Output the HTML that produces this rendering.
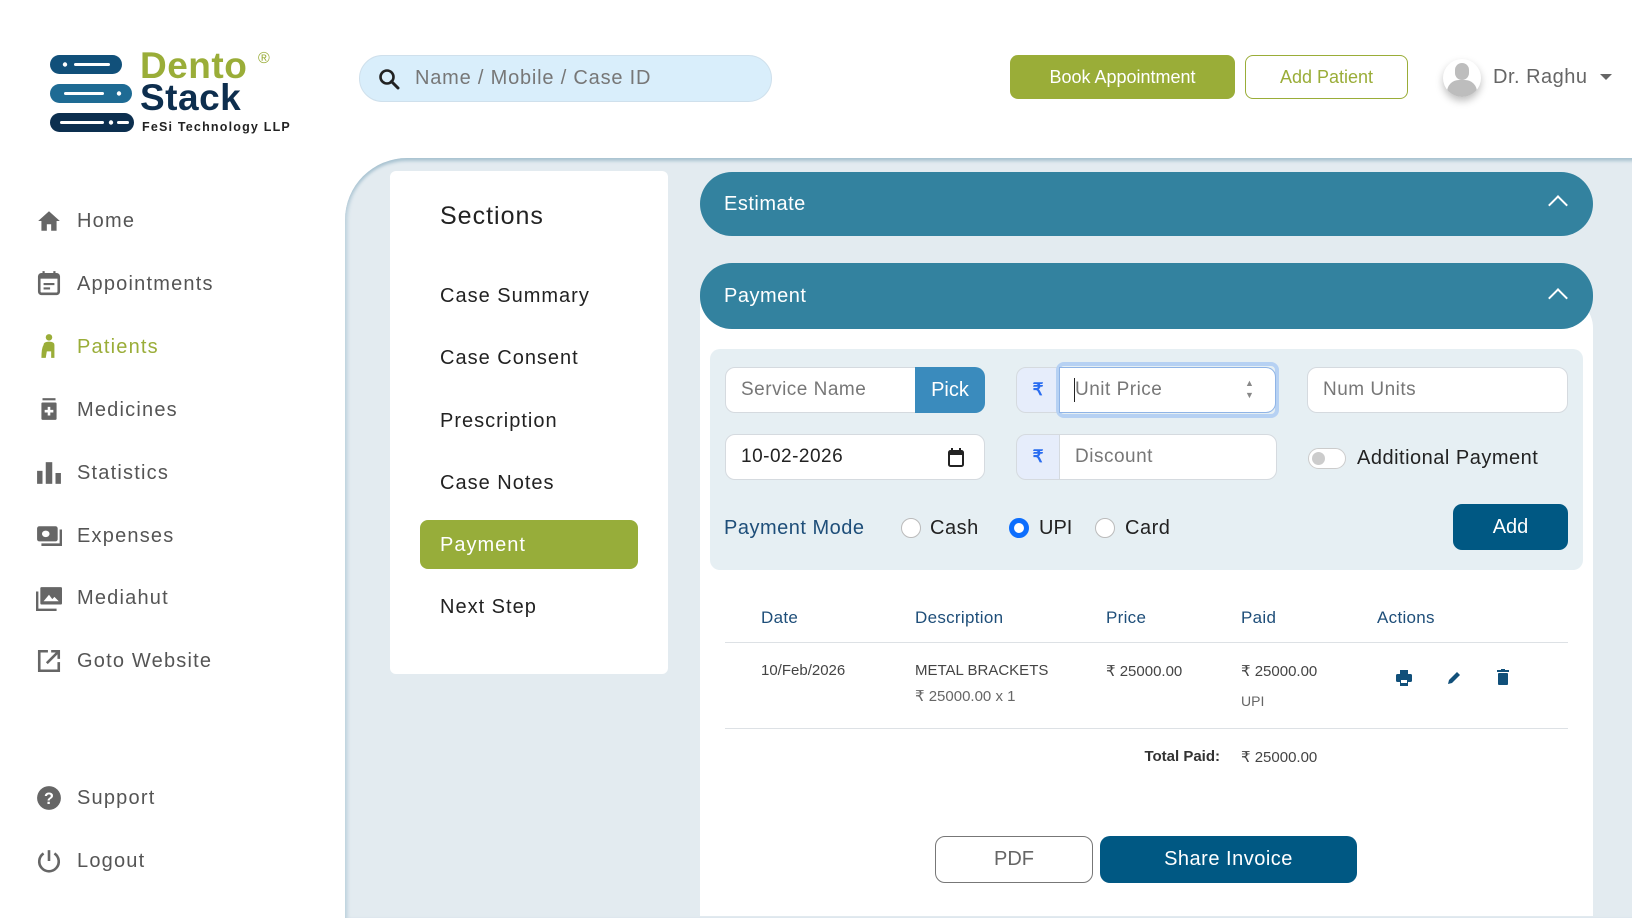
<!DOCTYPE html>
<html><head><meta charset="utf-8">
<style>
*{box-sizing:border-box;margin:0;padding:0}
body{width:1632px;height:897px;overflow:hidden;background:#fff;font-family:"Liberation Sans",sans-serif;position:relative;color:#222}
.abs{position:absolute}
.nav{position:absolute;left:77px;font-size:20px;color:#555;letter-spacing:1.2px}
.navi{position:absolute;left:36px;width:26px;height:26px}
.main{position:absolute;left:345px;top:158px;width:1320px;height:760px;background:#e3ebf0;border-top-left-radius:62px;box-shadow:inset 0 4px 3px -1px #a9c3d1, inset 4px 0 3px -1px #c7d8e2}
.sec{position:absolute;left:390px;top:171px;width:278px;height:503px;background:#fff;border-radius:6px}
.si{position:absolute;left:440px;font-size:20px;color:#222;letter-spacing:1px}
.hdr{position:absolute;left:700px;width:893px;height:64px;background:#33829f;border-radius:32px;color:#fff;font-size:20px;padding:0 0 0 24px;line-height:64px;letter-spacing:0.5px}
.chev{position:absolute;right:28px;top:26px;width:14px;height:14px;border-left:2px solid #fff;border-top:2px solid #fff;transform:rotate(45deg)}
.inp{position:absolute;background:#fff;border:1px solid #d5dadf;border-radius:10px;height:46px;font-size:19px;color:#777;line-height:44px;padding-left:15px;letter-spacing:0.5px}
.rup{position:absolute;background:#e6edfb;border:1px solid #d5dadf;border-radius:10px 0 0 10px;width:44px;height:46px;color:#2a6df0;font-size:17px;text-align:center;line-height:44px;font-weight:bold}
.radio{position:absolute;width:20px;height:20px;border-radius:50%;border:1px solid #bbb;background:#fff}
.th{position:absolute;top:608px;font-size:17px;color:#1e4e79;letter-spacing:0.3px}
.td{position:absolute;font-size:15px;color:#444}
</style></head><body>

<svg class="abs" style="left:50px;top:55px" width="90" height="80" viewBox="0 0 90 80">
<rect x="0" y="0" width="72" height="19" rx="9.5" fill="#11507a"/>
<circle cx="15" cy="9.5" r="2.2" fill="#fff"/><rect x="24" y="8" width="36" height="3" rx="1.5" fill="#fff"/>
<rect x="0" y="29" width="82" height="19" rx="9.5" fill="#1e6b94"/>
<rect x="14" y="37" width="40" height="3" rx="1.5" fill="#fff"/><circle cx="69" cy="38.5" r="2.2" fill="#fff"/>
<rect x="0" y="58" width="84" height="19" rx="9.5" fill="#0c2f4f"/>
<rect x="10" y="66" width="44" height="3" rx="1.5" fill="#fff"/><circle cx="61" cy="67.5" r="2.2" fill="#fff"/><rect x="67" y="66" width="12" height="3" rx="1.5" fill="#fff"/>
</svg>
<div class="abs" style="left:140px;top:45px;font-size:37px;font-weight:bold;color:#9aad38;letter-spacing:0.5px">Dento</div>
<div class="abs" style="left:258px;top:50px;font-size:16px;color:#9aad38">®</div>
<div class="abs" style="left:140px;top:77px;font-size:37px;font-weight:bold;color:#0d2e4e;letter-spacing:0.5px">Stack</div>
<div class="abs" style="left:142px;top:120px;font-size:12.5px;font-weight:bold;color:#222;letter-spacing:1.2px">FeSi Technology LLP</div>

<div class="abs" style="left:359px;top:55px;width:413px;height:47px;background:#d9eefb;border:1px solid #cfe0ec;border-radius:24px"></div>
<svg class="abs" style="left:378px;top:68px" width="22" height="22" viewBox="0 0 22 22"><circle cx="9" cy="9" r="6.5" fill="none" stroke="#222" stroke-width="2.6"/><path d="M13.5 13.5L20 20" stroke="#222" stroke-width="3" stroke-linecap="round"/></svg>
<div class="abs" style="left:415px;top:67px;font-size:20px;color:#777;letter-spacing:0.8px">Name / Mobile / Case ID</div>

<div class="abs" style="left:1010px;top:55px;width:225px;height:44px;background:#9aad38;border-radius:8px;color:#fff;font-size:18px;text-align:center;line-height:44px">Book Appointment</div>
<div class="abs" style="left:1245px;top:55px;width:163px;height:44px;border:1px solid #9aad38;border-radius:8px;color:#9aad38;font-size:18px;text-align:center;line-height:42px">Add Patient</div>
<div class="abs" style="left:1443px;top:59px;width:38px;height:38px;border-radius:50%;background:#fff;box-shadow:0 4px 8px rgba(0,0,0,.25);overflow:hidden">
<div class="abs" style="left:12px;top:4px;width:14px;height:17px;border-radius:7px;background:#bdbdbd"></div>
<div class="abs" style="left:4px;top:21px;width:30px;height:24px;border-radius:12px 12px 0 0;background:#bdbdbd"></div></div>
<div class="abs" style="left:1493px;top:66px;font-size:20px;color:#666;letter-spacing:0.5px">Dr. Raghu</div>
<div class="abs" style="left:1600px;top:74px;width:0;height:0;border-left:6px solid transparent;border-right:6px solid transparent;border-top:6px solid #666"></div>

<svg class="navi" style="top:208px" viewBox="0 0 24 24"><path d="M12 3L2 12h3v9h5v-6h4v6h5v-9h3z" fill="#666"/></svg>
<div class="nav" style="top:210px">Home</div>
<svg class="navi" style="top:270px" viewBox="0 0 24 24"><path d="M7 1v3M17 1v3" stroke="#666" stroke-width="2"/><rect x="3" y="4" width="18" height="18" rx="2" fill="none" stroke="#666" stroke-width="2.4"/><rect x="3" y="4" width="18" height="4" fill="#666"/><path d="M7 13h10M7 17h6" stroke="#666" stroke-width="2"/></svg>
<div class="nav" style="top:273px">Appointments</div>
<svg class="navi" style="top:333px" viewBox="0 0 24 24"><circle cx="12" cy="4" r="3" fill="#9aad38"/><path d="M7 11q0-3 5-3t5 3v12h-3v-6h-4l-1 6H5q0-9 2-12z" fill="#9aad38"/></svg>
<div class="nav" style="top:336px;color:#9aad38">Patients</div>
<svg class="navi" style="top:396px" viewBox="0 0 24 24"><rect x="6" y="2" width="12" height="2" fill="#666"/><rect x="5" y="6" width="14" height="16" rx="1" fill="#666"/><path d="M12 10v8M8 14h8" stroke="#fff" stroke-width="2.4"/></svg>
<div class="nav" style="top:399px">Medicines</div>
<svg class="navi" style="top:460px" viewBox="0 0 24 24"><rect x="1" y="10" width="5" height="12" fill="#666"/><rect x="9" y="2" width="6" height="20" fill="#666"/><rect x="18" y="12" width="5" height="10" fill="#666"/></svg>
<div class="nav" style="top:462px">Statistics</div>
<svg class="navi" style="top:523px" viewBox="0 0 24 24"><rect x="1" y="3" width="19" height="14" rx="2" fill="#666"/><ellipse cx="9" cy="10" rx="3.5" ry="3" fill="#fff"/><path d="M23 6v14H5" fill="none" stroke="#666" stroke-width="2.4"/></svg>
<div class="nav" style="top:525px">Expenses</div>
<svg class="navi" style="top:585px" viewBox="0 0 24 24"><rect x="4" y="2" width="20" height="16" rx="1" fill="#666"/><path d="M7 15l5-6 3 4 2-2 4 4z" fill="#fff"/><path d="M1 6v17h18" fill="none" stroke="#666" stroke-width="2.4"/></svg>
<div class="nav" style="top:587px">Mediahut</div>
<svg class="navi" style="top:648px" viewBox="0 0 24 24"><path d="M11 3H3v18h18v-8" fill="none" stroke="#666" stroke-width="2.4"/><path d="M14 3h7v7M21 3L10 14" fill="none" stroke="#666" stroke-width="2.4"/></svg>
<div class="nav" style="top:650px">Goto Website</div>
<svg class="navi" style="top:785px" viewBox="0 0 24 24"><circle cx="12" cy="12" r="11" fill="#666"/><text x="12" y="17.5" text-anchor="middle" font-size="15" font-weight="bold" fill="#fff" font-family="Liberation Sans">?</text></svg>
<div class="nav" style="top:787px">Support</div>
<svg class="navi" style="top:848px" viewBox="0 0 24 24"><path d="M7 5a9 9 0 1 0 10 0" fill="none" stroke="#666" stroke-width="2.4"/><path d="M12 2v10" stroke="#666" stroke-width="2.4"/></svg>
<div class="nav" style="top:850px">Logout</div>

<div class="main"></div>
<div class="sec"></div>
<div class="si" style="top:202px;font-size:25px;color:#222">Sections</div>
<div class="si" style="top:285px">Case Summary</div>
<div class="si" style="top:347px">Case Consent</div>
<div class="si" style="top:410px">Prescription</div>
<div class="si" style="top:472px">Case Notes</div>
<div class="abs" style="left:420px;top:520px;width:218px;height:49px;background:#97ad3a;border-radius:8px"></div>
<div class="si" style="top:534px;color:#fff">Payment</div>
<div class="si" style="top:596px">Next Step</div>

<div class="hdr" style="top:172px">Estimate<div class="chev"></div></div>
<div class="abs" style="left:700px;top:296px;width:893px;height:620px;background:#fff;border-radius:0 32px 0 0"></div>
<div class="hdr" style="top:263px;height:66px;line-height:66px">Payment<div class="chev" style="top:28px"></div></div>

<div class="abs" style="left:710px;top:349px;width:873px;height:221px;background:#e6eff3;border-radius:10px"></div>
<div class="inp" style="left:725px;top:367px;width:200px;border-radius:10px 0 0 10px">Service Name</div>
<div class="abs" style="left:915px;top:367px;width:70px;height:46px;background:#3a8bbd;border-radius:0 10px 10px 0;color:#fff;font-size:20px;text-align:center;line-height:46px">Pick</div>
<div class="rup" style="left:1016px;top:367px">₹</div>
<div class="abs" style="left:1056px;top:362px;width:223px;height:56px;border:4px solid #b6d1f3;border-radius:8px"></div>
<div class="inp" style="left:1059px;top:367px;width:217px;border-radius:0 10px 10px 0;border-color:#8fb4e6">Unit Price</div>
<div class="abs" style="left:1074px;top:378px;width:1px;height:24px;background:#222"></div>
<div class="abs" style="left:1245px;top:377px;font-size:9px;color:#888;line-height:12px">▲<br>▼</div>
<div class="inp" style="left:1307px;top:367px;width:261px">Num Units</div>
<div class="inp" style="left:725px;top:434px;width:260px;color:#222">10-02-2026</div>
<svg class="abs" style="left:947px;top:447px" width="18" height="20" viewBox="0 0 18 20"><rect x="2" y="4" width="14" height="15" rx="1.5" fill="none" stroke="#222" stroke-width="2"/><rect x="2" y="4" width="14" height="4" fill="#222"/><path d="M5 1v4M13 1v4" stroke="#222" stroke-width="2"/></svg>
<div class="rup" style="left:1016px;top:434px">₹</div>
<div class="inp" style="left:1059px;top:434px;width:218px;border-radius:0 10px 10px 0">Discount</div>
<div class="abs" style="left:1308px;top:448px;width:38px;height:21px;border:1px solid #ccc;border-radius:11px;background:#fff"></div>
<div class="abs" style="left:1312px;top:452px;width:13px;height:13px;border-radius:50%;background:#ccc"></div>
<div class="abs" style="left:1357px;top:447px;font-size:20px;color:#222;letter-spacing:0.5px">Additional Payment</div>

<div class="abs" style="left:724px;top:517px;font-size:20px;color:#1e4e79;letter-spacing:0.5px">Payment Mode</div>
<div class="radio" style="left:901px;top:518px"></div>
<div class="abs" style="left:930px;top:517px;font-size:20px;color:#222;letter-spacing:0.5px">Cash</div>
<div class="radio" style="left:1009px;top:518px;border:5px solid #0d6efd"></div>
<div class="abs" style="left:1039px;top:517px;font-size:20px;color:#222">UPI</div>
<div class="radio" style="left:1095px;top:518px"></div>
<div class="abs" style="left:1125px;top:517px;font-size:20px;color:#222;letter-spacing:0.5px">Card</div>
<div class="abs" style="left:1453px;top:504px;width:115px;height:46px;background:#005883;border-radius:9px;color:#fff;font-size:20px;text-align:center;line-height:46px">Add</div>

<div class="th" style="left:761px">Date</div>
<div class="th" style="left:915px">Description</div>
<div class="th" style="left:1106px">Price</div>
<div class="th" style="left:1241px">Paid</div>
<div class="th" style="left:1377px">Actions</div>
<div class="abs" style="left:725px;top:642px;width:843px;height:1px;background:#dde1e5"></div>
<div class="td" style="left:761px;top:662px">10/Feb/2026</div>
<div class="td" style="left:915px;top:662px">METAL BRACKETS</div>
<div class="td" style="left:915px;top:687px;color:#666">₹ 25000.00 x 1</div>
<div class="td" style="left:1106px;top:662px">₹ 25000.00</div>
<div class="td" style="left:1241px;top:662px">₹ 25000.00</div>
<div class="td" style="left:1241px;top:693px;font-size:14px;color:#666">UPI</div>
<svg class="abs" style="left:1396px;top:670px" width="16" height="16" viewBox="0 0 16 16"><rect x="4" y="0" width="8" height="4" fill="#11507a"/><rect x="0" y="4" width="16" height="8" rx="1.5" fill="#11507a"/><rect x="4" y="9" width="8" height="7" fill="#11507a"/><rect x="5" y="10" width="6" height="3" fill="#fff"/></svg>
<svg class="abs" style="left:1446px;top:670px" width="16" height="16" viewBox="0 0 16 16"><path d="M2 14l1-4 8-8 3 3-8 8z" fill="#11507a"/></svg>
<svg class="abs" style="left:1497px;top:669px" width="12" height="16" viewBox="0 0 12 16"><rect x="0" y="1" width="12" height="2" fill="#11507a"/><rect x="4" y="0" width="4" height="2" fill="#11507a"/><rect x="1" y="4" width="10" height="12" rx="1" fill="#11507a"/></svg>
<div class="abs" style="left:725px;top:728px;width:843px;height:1px;background:#dde1e5"></div>
<div class="td" style="left:1100px;top:748px;width:120px;text-align:right;font-weight:bold;color:#333">Total Paid:</div>
<div class="td" style="left:1241px;top:748px">₹ 25000.00</div>

<div class="abs" style="left:935px;top:836px;width:158px;height:47px;border:1px solid #777;border-radius:10px;color:#666;font-size:20px;text-align:center;line-height:45px">PDF</div>
<div class="abs" style="left:1100px;top:836px;width:257px;height:47px;background:#005883;border-radius:10px;color:#fff;font-size:20px;text-align:center;line-height:47px;letter-spacing:0.5px">Share Invoice</div>
</body></html>
